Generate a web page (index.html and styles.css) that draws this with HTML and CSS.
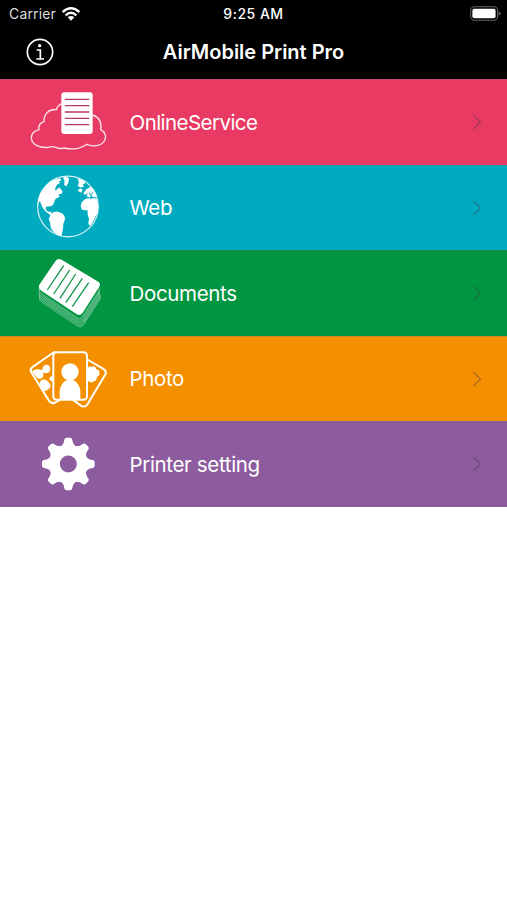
FILE: index.html
```html
<!DOCTYPE html>
<html lang="en">
<head>
<meta charset="utf-8">
<title>AirMobile Print Pro</title>
<link rel="stylesheet" href="styles.css">
</head>
<body>
<header class="header">
  <div class="status">
    <div class="carrier"><span class="carrier-name">Carrier</span>
      <svg class="wifi" viewBox="0 0 54 42"><g fill="none" stroke="#fff" stroke-width="7"><path d="M2 15Q27-7 52 15"/><path d="M11 25Q27 10 43 25"/></g><path d="M17 31Q27 23 37 31L27 41Z" fill="#fff"/></svg>
    </div>
    <time class="time">9:25 AM</time>
    <svg class="battery" viewBox="0 0 92 44"><rect x="2" y="2" width="80" height="40" rx="11" fill="none" stroke="#656565" stroke-width="3"/><rect x="7" y="8" width="69" height="28" rx="6" fill="#fff"/><path d="M85 15Q91 18 91 22T85 29Z" fill="#656565"/></svg>
  </div>
  <div class="navbar">
    <svg class="info" viewBox="0 0 84 84"><circle cx="42" cy="42" r="38" fill="none" stroke="#fff" stroke-width="5"/><circle cx="41" cy="23" r="5" fill="#fff"/><path d="M32 36H43V62M31 63H54" fill="none" stroke="#fff" stroke-width="5"/></svg>
    <h1 class="title">AirMobile Print Pro</h1>
    <span></span>
  </div>
</header>
<main class="menu">
  <div class="row online">
    <svg class="icon" viewBox="0 -3 300 256.500"><path d="M124 71C116 75 111 82 109 89C87 86 71 102 72 125C59 130 54 138 57 149C42 153 34 162 34 174C36 195 60 205 85 202Q98 198 108 202Q119 208 133 204Q154 209 174 205Q190 201 201 193Q225 203 244 192C260 181 262 160 242 149C246 126 235 111 218 105" fill="none" stroke="#fff" stroke-opacity=".85" stroke-width="4"/><rect x="124" y="37" width="94" height="125" rx="9" fill="#fff"/><path d="M134 58H208M134 77H208M134 96H208M134 115H208M134 134H208" stroke="#b83b62" stroke-width="4"/></svg>
    <span class="label">OnlineService</span>
    <svg class="chevron" viewBox="0 0 30 48"><path d="M4 3L25 24L4 45"/></svg>
  </div>
  <div class="row web">
    <svg class="icon" viewBox="0 -4.500 300 256.500"><circle cx="144" cy="120" r="91" fill="none" stroke="#fff" stroke-opacity=".85" stroke-width="3.500"/><g fill="#fff"><path d="M53 120C52 86 73 50 108 38L122 36L124 41L115 46L121 49L111 55L105 66L107 73L117 62L127 73L126 81L115 84L119 91L107 97L102 107L98 117L88 120L78 121L77 130L85 136L94 136L93 142L99 137L111 135L126 140L134 149L135 159L130 172L129 187L125 204L124 209C109 205 94 193 92 181L90 167L86 157L91 148L87 142C75 136 65 123 60 103Q54 108 53 120Z"/><path d="M129 33Q139 28 147 36L145 49L139 60L132 54L134 44Z"/><path d="M173 36L192 43L196 50L188 54L192 61L180 63L173 57L177 48ZM180 65L188 70L184 79L173 73ZM190 81L199 68L212 61L219 66L229 85L228 92L217 91L213 84L210 93L200 89L203 80L194 85Z"/><path d="M194 99Q205 92 213 97L224 94L231 99Q237 116 234 136L224 155L215 172L209 178L205 172L207 157L203 145L203 132L186 130L182 119L185 107Z"/></g><path d="M188 76L195 70M207 78L212 86L219 77" fill="none" stroke="#00abc0" stroke-width="3"/></svg>
    <span class="label">Web</span>
    <svg class="chevron" viewBox="0 0 30 48"><path d="M4 3L25 24L4 45"/></svg>
  </div>
  <div class="row documents">
    <svg class="icon" viewBox="0 -3 300 256.500"><g fill="#009641" stroke="#b9dfca" stroke-width="1.700"><path d="M59 136L107 66Q114 57 125 63L232 131Q246 137 238 148L191 220Q183 232 171 224L66 154Q55 147 59 136Z"/><path d="M59 131L108 60Q114 52 125 58L231 126Q244 132 237 143L191 215Q183 227 171 219L66 148Q54 142 59 131Z"/><path d="M59 126L108 55Q114 47 125 53L231 121Q244 127 237 138L190 210Q182 222 171 214L65 143Q54 137 59 126Z"/><path d="M58 121L107 50Q114 42 125 48L231 116Q243 122 236 133L190 205Q182 217 171 209L65 138Q54 132 58 121Z"/><path d="M58 116L107 45Q114 37 124 43L231 111Q242 117 235 128L189 200Q181 212 171 204L65 133Q54 127 58 116Z"/><path d="M58 111L107 40Q113 32 124 38L230 106Q242 112 235 123L188 195Q180 207 170 199L65 128Q54 122 58 111Z"/></g><path d="M58 101L106 31Q114 19 126 27L231 90Q245 97 237 109L188 185Q180 197 169 189L64 119Q53 112 58 101Z" fill="#fff"/><path d="M131 44L82 117M149 57L101 129M167 69L120 142M187 82L138 154M206 95L157 167" stroke="#15964e" stroke-width="4"/></svg>
    <span class="label">Documents</span>
    <svg class="chevron" viewBox="0 0 30 48"><path d="M4 3L25 24L4 45"/></svg>
  </div>
  <div class="row photo">
    <svg class="icon" viewBox="0 -4.500 300 256.500"><g fill="none" stroke="#fff" stroke-width="6" stroke-linejoin="round"><path d="M105 42L38 88Q30 94 33 103L86 188Q94 201 106 195L120 187M202 66L250 94Q261 101 256 111L202 201Q195 211 184 205L160 188"/><rect x="100" y="44" width="101" height="143" rx="10"/></g><g fill="#fff"><circle cx="150" cy="103" r="26"/><path d="M119 186V161Q120 144 135 130Q150 125 165 130Q180 144 181 161V186Z"/><path d="M36 101Q50 91 67 98Q67 86 77 82C91 78 96 99 84 106Q74 109 68 105Q74 117 65 122Q57 126 50 120ZM63 128Q76 123 84 132Q91 137 92 148Q86 158 72 161L58 139ZM98 115Q88 117 88 126Q92 132 98 132ZM203 92Q208 83 216 88Q226 83 229 95Q240 97 238 107Q240 114 231 118Q231 130 220 132Q214 139 203 129Z"/></g></svg>
    <span class="label">Photo</span>
    <svg class="chevron" viewBox="0 0 30 48"><path d="M4 3L25 24L4 45"/></svg>
  </div>
  <div class="row settings">
    <svg class="icon" viewBox="0 -3 300 256.500"><defs><path id="tooth" d="M120 75Q132 67 133 53Q134 47 140 47H150Q156 47 157 53Q158 67 170 75Z"/></defs><g fill="#fff"><use href="#tooth"/><use href="#tooth" transform="rotate(45 145 126)"/><use href="#tooth" transform="rotate(90 145 126)"/><use href="#tooth" transform="rotate(135 145 126)"/><use href="#tooth" transform="rotate(180 145 126)"/><use href="#tooth" transform="rotate(225 145 126)"/><use href="#tooth" transform="rotate(270 145 126)"/><use href="#tooth" transform="rotate(315 145 126)"/></g><circle cx="145" cy="126" r="42" fill="none" stroke="#fff" stroke-width="33"/></svg>
    <span class="label">Printer setting</span>
    <svg class="chevron" viewBox="0 0 30 48"><path d="M4 3L25 24L4 45"/></svg>
  </div>
</main>
</body>
</html>
```
FILE: styles.css
```css
* { box-sizing: border-box; }
body { margin: 0; background: #fff; color: #fff; font-family: Inter, "Liberation Sans", sans-serif; }
svg { display: block; flex: none; }
.header { height: 79px; background: #000; }
.status { height: 27px; padding: 0 6px 0 9px; display: grid; grid-template-columns: 1fr auto 1fr; align-items: center; }
.carrier { display: flex; align-items: center; gap: 6px; font-size: 14px; color: #ddd; }
.carrier-name { letter-spacing: .15px; }
.wifi { width: 18px; height: 14px; }
.time { margin-right: 3px; font-size: 14px; font-weight: 500; letter-spacing: .5px; }
.battery { width: 31px; height: 15px; justify-self: end; }
.navbar { height: 50px; padding: 0 26px; display: grid; grid-template-columns: 1fr auto 1fr; align-items: center; }
.info { width: 28px; height: 28px; }
.title { margin: 0; font-size: 20px; font-weight: 600; letter-spacing: -.02px; line-height: 28px; }
.row { height: 85.5px; padding: 0 25px 0 20px; display: flex; align-items: center; border-top: 1px solid rgba(120, 120, 120, .3); }
.icon { width: 100px; height: 85.5px; margin-top: -1px; }
.label { flex: 1; margin: 1px 0 0 9.5px; font-size: 20.5px; line-height: 28px; letter-spacing: -.35px; }
.chevron { width: 10px; height: 16px; fill: none; stroke: #3c3c43; stroke-opacity: .35; stroke-width: 5; }
.online { background: #e83a62; }
.online .label { letter-spacing: -.55px; }
.web { background: #00abc0; }
.documents { background: #009641; }
.photo { background: #f49000; }
.settings { background: #8d5c9e; }
```
